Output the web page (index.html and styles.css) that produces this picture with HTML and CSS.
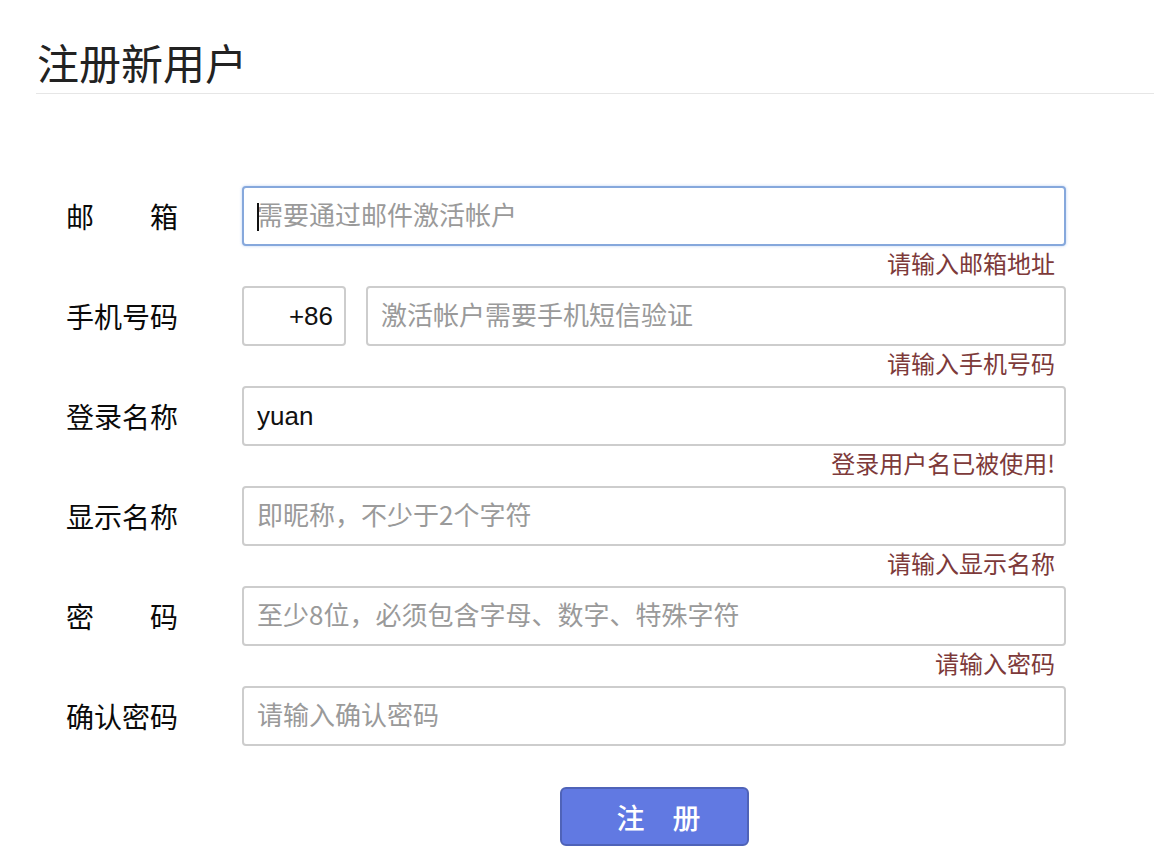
FILE: index.html
```html
<!DOCTYPE html>
<html lang="zh-CN">
<head>
<meta charset="utf-8">
<title>注册新用户</title>
<link rel="stylesheet" href="styles.css">
</head>
<body>
<div class="page">
  <h1 class="title">注册新用户</h1>
  <form class="form">
    <div class="row">
      <label class="lbl"><span>邮</span><span>箱</span></label>
      <div class="field">
        <div class="ctrl">
          <input class="inp focused" type="text" placeholder="需要通过邮件激活帐户">
          <span class="caret"></span>
        </div>
        <div class="err">请输入邮箱地址</div>
      </div>
    </div>
    <div class="row">
      <label class="lbl"><span>手</span><span>机</span><span>号</span><span>码</span></label>
      <div class="field">
        <div class="ctrl phone">
          <input class="inp code" type="text" value="+86">
          <input class="inp" type="text" placeholder="激活帐户需要手机短信验证">
        </div>
        <div class="err">请输入手机号码</div>
      </div>
    </div>
    <div class="row">
      <label class="lbl"><span>登</span><span>录</span><span>名</span><span>称</span></label>
      <div class="field">
        <div class="ctrl"><input class="inp" type="text" value="yuan"></div>
        <div class="err">登录用户名已被使用!</div>
      </div>
    </div>
    <div class="row">
      <label class="lbl"><span>显</span><span>示</span><span>名</span><span>称</span></label>
      <div class="field">
        <div class="ctrl"><input class="inp" type="text" placeholder="即昵称，不少于2个字符"></div>
        <div class="err">请输入显示名称</div>
      </div>
    </div>
    <div class="row">
      <label class="lbl"><span>密</span><span>码</span></label>
      <div class="field">
        <div class="ctrl"><input class="inp" type="password" placeholder="至少8位，必须包含字母、数字、特殊字符"></div>
        <div class="err">请输入密码</div>
      </div>
    </div>
    <div class="row last">
      <label class="lbl"><span>确</span><span>认</span><span>密</span><span>码</span></label>
      <div class="field">
        <div class="ctrl"><input class="inp" type="password" placeholder="请输入确认密码"></div>
      </div>
    </div>
    <div class="actions">
      <button class="btn" type="button">注　册</button>
    </div>
  </form>
</div>
</body>
</html>
```

FILE: styles.css
```css
* { box-sizing: border-box; }
html, body { margin: 0; padding: 0; background: #fff; }
body {
  font-family: "Noto Sans CJK SC", "Noto Sans", "Liberation Sans", sans-serif;
  color: #111;
}
.page { padding-left: 36px; }
.title {
  margin: 37px 0 0 0;
  padding: 0 0 7px 1px;
  font-size: 42px;
  line-height: 49px;
  font-weight: 400;
  color: #222;
  border-bottom: 1px solid #e6e6e6;
}
.form { padding: 92px 0 0 30px; }
.row {
  display: grid;
  grid-template-columns: 112px 824px;
  column-gap: 64px;
  height: 100px;
}
.row.last { height: 60px; }
.lbl {
  height: 60px;
  display: flex;
  align-items: center;
  justify-content: space-between;
  font-size: 28px;
  color: #0a0a0a;
  white-space: nowrap;
}
.field { display: flex; flex-direction: column; }
.ctrl { position: relative; display: flex; gap: 20px; height: 60px; }
.inp {
  flex: 1;
  min-width: 0;
  height: 60px;
  border: 2px solid #cdcdcd;
  border-radius: 4px;
  padding: 0 13px;
  font-family: "Liberation Sans", "Noto Sans CJK SC", sans-serif;
  font-size: 26px;
  color: #111;
  background: #fff;
  outline: none;
}
.inp::placeholder {
  color: #9a9a9a;
  font-family: "Noto Sans CJK SC", "Liberation Sans", sans-serif;
}
.inp.code { flex: 0 0 104px; text-align: right; padding-right: 11px; }
.inp.focused {
  border-color: #86a8dc;
  box-shadow: 0 0 3px rgba(102, 150, 230, 0.45);
}
.caret {
  position: absolute;
  left: 15px;
  top: 17px;
  width: 2px;
  height: 28px;
  background: #111;
}
.err {
  height: 40px;
  padding: 2px 11px 0 0;
  text-align: right;
  font-size: 24px;
  line-height: 30px;
  color: #7d3a3a;
}
.actions {
  display: grid;
  grid-template-columns: 112px 824px;
  column-gap: 64px;
  padding-top: 41px;
}
.btn {
  grid-column: 2;
  justify-self: center;
  width: 189px;
  height: 59px;
  border: 2px solid #4f63b8;
  border-radius: 6px;
  background: #6179e2;
  color: #fff;
  font-family: "Noto Sans CJK SC", sans-serif;
  font-size: 28px;
  font-weight: 500;
  padding: 0 0 0 9px;
  cursor: pointer;
}
```
